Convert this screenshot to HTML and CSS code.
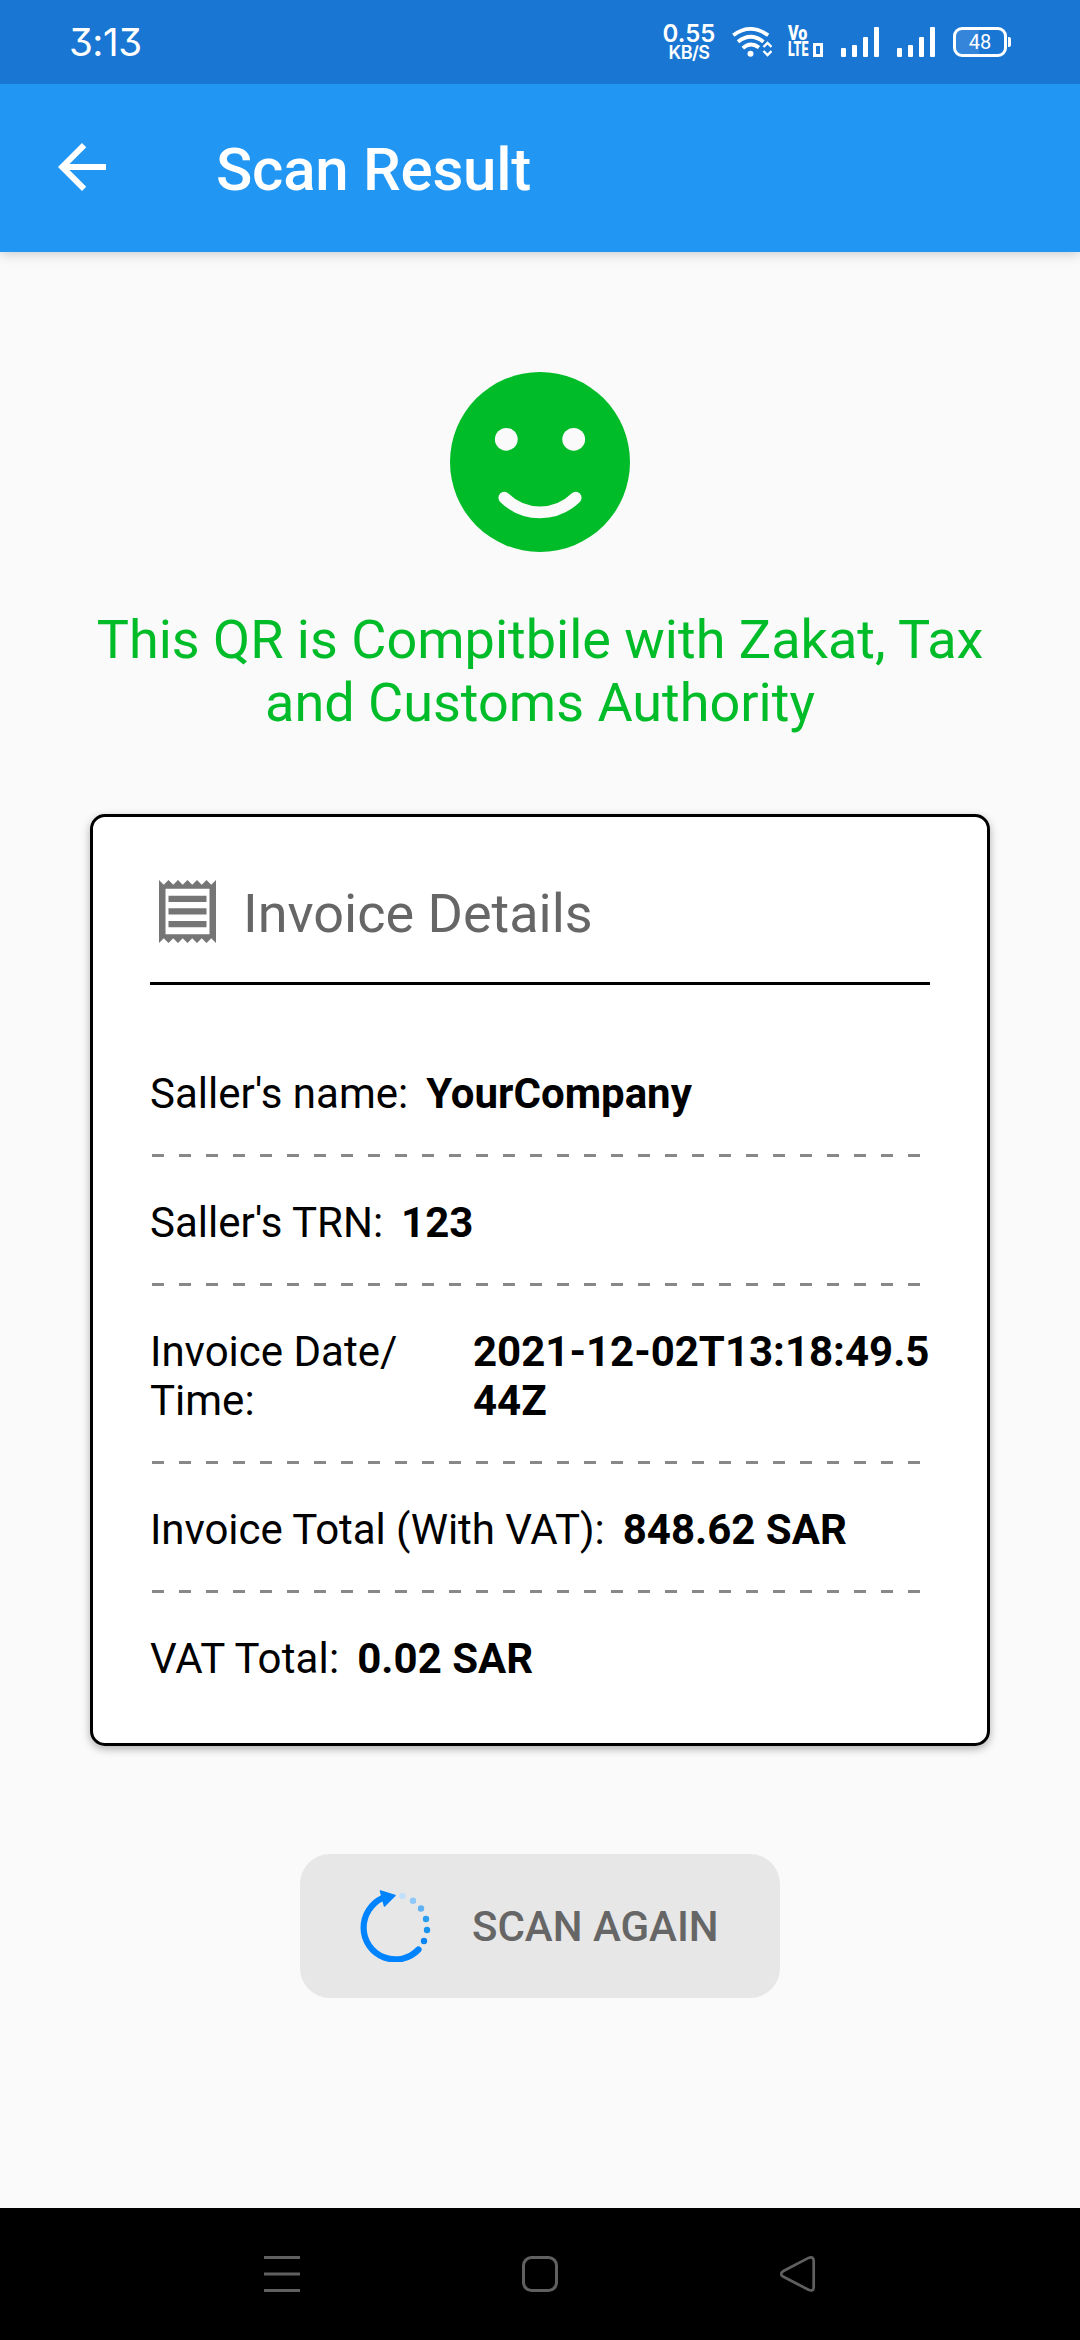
FILE: index.html
```html
<!DOCTYPE html>
<html lang="en">
<head>
<meta charset="utf-8">
<title>Scan Result</title>
<link rel="stylesheet" href="styles.css">
</head>
<body>
<header class="status">
  <span class="clock">3:13</span>
  <div class="tray">
    <div class="speed"><span class="speed-num">0.55</span><span class="speed-unit">KB/S</span></div>
    <svg class="wifi" width="40" height="30" viewBox="0 0 40 30" fill="none" stroke="#fff" stroke-width="3.8">
      <path d="M1.300 8.300Q18.500-4.500 36.200 8.300"/>
      <path d="M6 14.800Q18.500 4.700 31.500 14.800"/>
      <path d="M10.800 21.200Q18.500 14.200 27 20.500"/>
      <circle cx="18.500" cy="26.700" r="3" fill="#fff" stroke="none"/>
      <path d="M31.500 20l4-4 4 4M31.500 24l4 4 4-4" stroke-width="2.400"/>
    </svg>
    <div class="volte"><span class="vo">Vo</span><div class="lte-line"><span class="lte">LTE</span><i class="sim"></i></div></div>
    <svg class="signal" width="38" height="30" viewBox="0 0 38 30" fill="#fff"><rect y="21" width="5" height="9" rx="1"/><rect x="11" y="18" width="5" height="12" rx="1"/><rect x="22" y="10" width="5" height="20" rx="1"/><rect x="33" width="5" height="30" rx="1"/></svg>
    <svg class="signal" width="38" height="30" viewBox="0 0 38 30" fill="#fff"><rect y="21" width="5" height="9" rx="1"/><rect x="11" y="18" width="5" height="12" rx="1"/><rect x="22" y="10" width="5" height="20" rx="1"/><rect x="33" width="5" height="30" rx="1"/></svg>
    <div class="battery"><span class="cell">48</span><i class="nub"></i></div>
  </div>
</header>
<div class="appbar">
  <svg class="back" width="72" height="72" viewBox="0 0 24 24" fill="#fff"><path d="M20 11H7.830l5.590-5.590L12 4l-8 8 8 8 1.410-1.410L7.830 13H20v-2z"/></svg>
  <h1 class="title">Scan Result</h1>
</div>
<main class="content">
  <svg class="smiley" width="180" height="180" viewBox="0 0 180 180">
    <circle cx="90" cy="90" r="90" fill="#00bc28"/>
    <circle cx="56.300" cy="67.300" r="11.400" fill="#fafafa"/>
    <circle cx="123.700" cy="67.300" r="11.400" fill="#fafafa"/>
    <path d="M54.300 125.700A51 51 0 0 0 125.700 125.700" fill="none" stroke="#fafafa" stroke-width="11.800" stroke-linecap="round"/>
  </svg>
  <p class="message">This QR is Compitbile with Zakat, Tax<br>and Customs Authority</p>
  <section class="card">
    <div class="card-head">
      <svg class="receipt" width="57" height="63" viewBox="0 0 57 63" fill="#757575">
        <path fill-rule="evenodd" d="M0 0l4.750 4.700L9.500 0l4.750 4.700L19 0l4.750 4.700L28.500 0l4.750 4.700L38 0l4.750 4.700L47.500 0l4.750 4.700L57 0V63l-4.750-4.700L47.500 63l-4.750-4.700L38 63l-4.750-4.700L28.500 63l-4.750-4.700L19 63l-4.750-4.700L9.500 63l-4.750-4.700L0 63zM6.500 8.800V54.200H50.500V8.800z"/>
        <path d="M9.500 15.700h38v6.300h-38zM9.500 28.300h38v6.300h-38zM9.500 41h38v6.300h-38z"/>
      </svg>
      <h2 class="card-title">Invoice Details</h2>
    </div>
    <div class="row"><span class="label">Saller's name:</span><span class="value">YourCompany</span></div>
    <div class="row"><span class="label">Saller's TRN:</span><span class="value">123</span></div>
    <div class="row"><span class="label label-date">Invoice Date/<br>Time:</span><span class="value value-date">2021-12-02T13:18:49.544Z</span></div>
    <div class="row"><span class="label label-total">Invoice Total (With VAT):</span><span class="value">848.62 SAR</span></div>
    <div class="row"><span class="label label-vat">VAT Total:</span><span class="value">0.02 SAR</span></div>
  </section>
  <button class="again" type="button">
    <svg class="rescan" width="72" height="72" viewBox="0 0 72 72">
      <path d="M22.500 8A32.500 33 0 0 0 3.600 38A31.800 31.800 0 0 0 58.500 59.500" fill="none" stroke="#0083ff" stroke-width="6.200" stroke-linecap="round"/>
      <path d="M20.500 1L35 5.500L24.500 16z" fill="#0083ff" stroke="#0083ff" stroke-width="1.500" stroke-linejoin="round"/>
      <circle cx="42.500" cy="6" r="3.200" fill="#c3e0fb"/>
      <circle cx="53" cy="10.800" r="3.200" fill="#8fc8fa"/>
      <circle cx="61" cy="18.500" r="3.200" fill="#5fb3f5"/>
      <circle cx="66" cy="29" r="3.200" fill="#2a9df0"/>
      <circle cx="67" cy="40" r="3.200" fill="#1893ee"/>
      <circle cx="64" cy="51" r="3.200" fill="#0a84f2"/>
    </svg>
    <span class="again-text">SCAN AGAIN</span>
  </button>
</main>
<nav class="navbar">
  <svg width="36" height="36" viewBox="0 0 36 36" fill="#606060"><path d="M0 0h36v3H0zM0 16.500h36v3H0zM0 33h36v3H0z"/></svg>
  <svg width="36" height="36" viewBox="0 0 36 36" fill="none" stroke="#606060" stroke-width="3"><rect x="1.500" y="1.500" width="33" height="33" rx="8"/></svg>
  <svg width="36" height="36" viewBox="0 0 36 36" fill="none" stroke="#606060" stroke-width="2.700"><path d="M3 15.300L28.500 1.900Q33.700 0 33.700 5V31Q33.700 36 28.500 33.800L3 20.500Q-.6 18 3 15.300z"/></svg>
</nav>
</body>
</html>
```

FILE: styles.css
```css
* { box-sizing: border-box; }
body {
  margin: 0;
  width: 1080px;
  height: 2340px;
  display: flex;
  flex-direction: column;
  background: #fafafa;
  font-family: Roboto, "Liberation Sans", sans-serif;
  overflow: hidden;
}
svg { display: block; flex: none; }
.status {
  height: 84px;
  background: #1976d2;
  color: #fff;
  display: flex;
  justify-content: space-between;
  align-items: center;
  padding: 0 69px 0 69px;
  font-family: Inter, Roboto, sans-serif;
  position: relative;
  z-index: 1;
}
.clock {
  font-size: 38.500px;
  line-height: 40px;
  font-feature-settings: "cv09";
  letter-spacing: -0.500px;
}
.tray { display: flex; align-items: center; height: 84px; }
.speed {
  width: 50px;
  display: flex;
  flex-direction: column;
  align-items: center;
  font-weight: 600;
  white-space: nowrap;
}
.speed-num { font-size: 24px; line-height: 20px; }
.speed-unit { font-size: 18px; line-height: 17px; letter-spacing: -0.500px; }
.wifi { margin-left: 18px; }
.volte {
  margin-left: 16px;
  width: 36px;
  height: 32px;
  display: flex;
  flex-direction: column;
  font: 900 19.500px/16px Roboto, sans-serif;
}
.vo, .lte { transform-origin: left center; }
.vo { transform: scaleX(0.830); }
.lte-line { display: flex; align-items: center; }
.lte { width: 25px; transform: scaleX(0.640); }
.sim { width: 10px; height: 14px; border: 3px solid #fff; flex: none; }
.signal { margin-left: 17px; }
.signal + .signal { margin-left: 18px; }
.battery { display: flex; align-items: center; margin-left: 18px; }
.cell {
  width: 54px;
  height: 30px;
  border: 3px solid #fff;
  border-radius: 9px;
  background: linear-gradient(90deg, #3585da 23px, transparent 23px);
  font: 400 20px/24px Roboto, sans-serif;
  text-align: center;
}
.nub { width: 3px; height: 10px; margin-left: 1px; background: #fff; border-radius: 0 2px 2px 0; }
.appbar {
  height: 168px;
  background: #2196f3;
  color: #fff;
  display: flex;
  align-items: center;
  padding: 0 46px 2px;
  box-shadow: 0 1px 12px rgba(0, 0, 0, 0.220);
}
.title { margin: 6px 0 0 98px; font-size: 60px; line-height: 70px; font-weight: 500; letter-spacing: -0.250px; }
.content { flex: 1; display: flex; flex-direction: column; align-items: center; padding-top: 120px; }
.message {
  margin: 56px 0 0;
  font-size: 54px;
  line-height: 63px;
  color: #00bc28;
  text-align: center;
  white-space: nowrap;
}
.card {
  margin-top: 80px;
  width: 900px;
  height: 932px;
  padding: 0 57px;
  border: 3px solid #000;
  border-radius: 15px;
  background: #fff;
  box-shadow: 0 3px 8px rgba(0, 0, 0, 0.300);
}
.card-head {
  height: 168px;
  border-bottom: 3px solid #000;
  padding: 63px 0 0 9px;
  margin-bottom: 58px;
  display: flex;
  align-items: flex-start;
}
.card-title { margin: 2px 0 0 27px; font-size: 54px; line-height: 63px; font-weight: 400; color: #666; }
.row {
  display: flex;
  padding: 26px 0 54px;
  font-size: 42px;
  line-height: 49px;
  color: #000;
  white-space: nowrap;
  background: repeating-linear-gradient(90deg, #888 0 12px, transparent 12px 27px) 1.500px calc(100% - 15px) / 768px 3px no-repeat;
}
.row:last-child { background: none; }
.value { font-weight: 700; margin-left: 18px; }
.label-date { width: 305px; }
.label-total { letter-spacing: -0.060px; }
.label-vat { letter-spacing: 0.150px; }
.value-date { width: 457px; word-break: break-all; white-space: normal; }
.again {
  margin-top: 108px;
  width: 480px;
  height: 144px;
  padding: 0 0 0 60px;
  border: 0;
  border-radius: 30px;
  background: #e7e7e7;
  color: #666;
  display: flex;
  align-items: center;
  font: 500 42px/49px Roboto, sans-serif;
}
.again-text { margin: 1px 0 0 40px; white-space: nowrap; }
.navbar {
  height: 132px;
  background: #000;
  display: flex;
  align-items: center;
  justify-content: center;
  gap: 222px;
}
```
